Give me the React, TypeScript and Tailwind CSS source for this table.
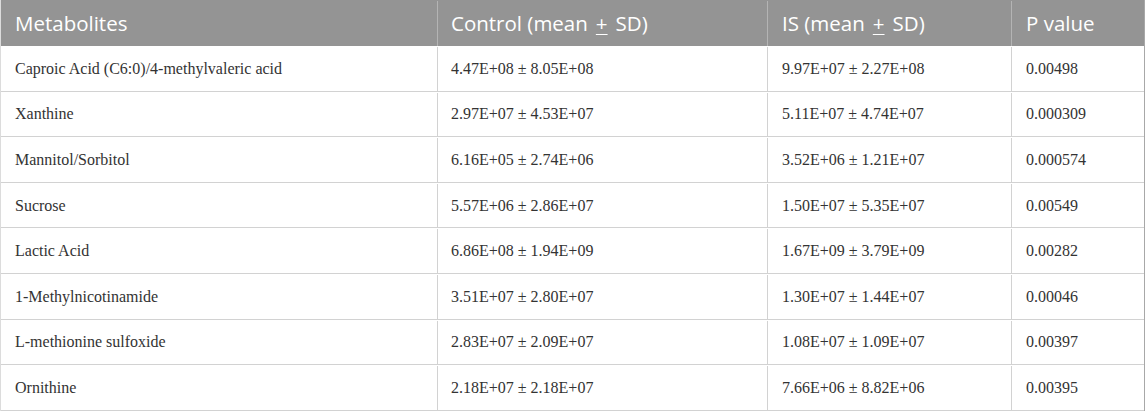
import React from "react";

const rows: [string, string, string, string][] = [
  ["Caproic Acid (C6:0)/4-methylvaleric acid", "4.47E+08 ± 8.05E+08", "9.97E+07 ± 2.27E+08", "0.00498"],
  ["Xanthine", "2.97E+07 ± 4.53E+07", "5.11E+07 ± 4.74E+07", "0.000309"],
  ["Mannitol/Sorbitol", "6.16E+05 ± 2.74E+06", "3.52E+06 ± 1.21E+07", "0.000574"],
  ["Sucrose", "5.57E+06 ± 2.86E+07", "1.50E+07 ± 5.35E+07", "0.00549"],
  ["Lactic Acid", "6.86E+08 ± 1.94E+09", "1.67E+09 ± 3.79E+09", "0.00282"],
  ["1-Methylnicotinamide", "3.51E+07 ± 2.80E+07", "1.30E+07 ± 1.44E+07", "0.00046"],
  ["L-methionine sulfoxide", "2.83E+07 ± 2.09E+07", "1.08E+07 ± 1.09E+07", "0.00397"],
  ["Ornithine", "2.18E+07 ± 2.18E+07", "7.66E+06 ± 8.82E+06", "0.00395"],
];

const grid = "grid grid-cols-[436px_330px_244px_133px]";

export default function App() {
  return (
    <div className="w-[1145px] h-[411px] bg-white overflow-hidden">
      <div className="border-l border-l-[#dcdcdc] border-r border-r-[#a8a8a8]">
        <div className={`${grid} h-[46px] pt-[1px] bg-[#949494] text-white text-[20.5px] font-['Open_Sans',sans-serif]`}>
          <div className="flex items-center pl-[14px]">Metabolites</div>
          <div className="flex items-center pl-[13px] border-l border-[#b4b4b4]">
            Control (mean<span className="underline underline-offset-[3px] decoration-1 mx-[8px]">+</span>SD)
          </div>
          <div className="flex items-center pl-[14px] border-l border-[#b4b4b4]">
            IS (mean<span className="underline underline-offset-[3px] decoration-1 mx-[8px]">+</span>SD)
          </div>
          <div className="flex items-center pl-[14px] border-l border-[#b4b4b4]">P value</div>
        </div>
        {rows.map((r, i) => (
          <div
            key={i}
            className={`${grid} h-[45.6px] pt-[1px] border-b border-[#d2d2d2] text-[16px] text-[#333333] font-['Liberation_Serif',serif]`}
          >
            <div className="flex items-center pl-[14px]">{r[0]}</div>
            <div className="flex items-center pl-[13px] border-l border-[#d2d2d2]">{r[1]}</div>
            <div className="flex items-center pl-[14px] border-l border-[#d2d2d2]">{r[2]}</div>
            <div className="flex items-center pl-[14px] border-l border-[#d2d2d2]">{r[3]}</div>
          </div>
        ))}
      </div>
    </div>
  );
}
